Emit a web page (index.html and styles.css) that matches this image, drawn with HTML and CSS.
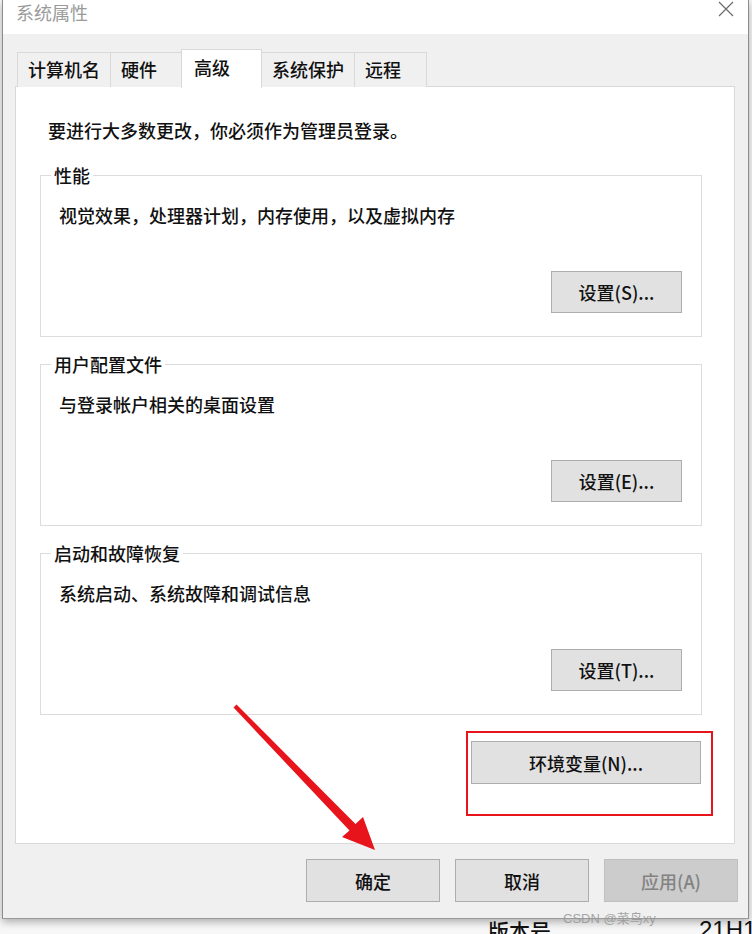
FILE: index.html
```html
<!DOCTYPE html>
<html lang="zh-CN">
<head>
<meta charset="utf-8">
<title>系统属性</title>
<link rel="stylesheet" href="styles.css">
</head>
<body>
<div class="window">
  <div class="titlebar">
    <span class="title">系统属性</span>
    <svg class="close" width="16" height="16" viewBox="0 0 16 16"><path d="M1 1L15 15M15 1L1 15" stroke="#6b6b6b" stroke-width="1.2" fill="none"/></svg>
  </div>
  <div class="content">
    <div class="tabs">
      <div class="tab">计算机名</div>
      <div class="tab tab-short">硬件</div>
      <div class="tab tab-active">高级</div>
      <div class="tab">系统保护</div>
      <div class="tab tab-short">远程</div>
    </div>
    <div class="panel">
      <p class="intro">要进行大多数更改，你必须作为管理员登录。</p>
      <fieldset class="group">
        <legend>性能</legend>
        <p class="desc">视觉效果，处理器计划，内存使用，以及虚拟内存</p>
        <div class="group-actions"><button class="btn btn-set">设置(S)...</button></div>
      </fieldset>
      <fieldset class="group">
        <legend>用户配置文件</legend>
        <p class="desc">与登录帐户相关的桌面设置</p>
        <div class="group-actions"><button class="btn btn-set">设置(E)...</button></div>
      </fieldset>
      <fieldset class="group">
        <legend>启动和故障恢复</legend>
        <p class="desc">系统启动、系统故障和调试信息</p>
        <div class="group-actions"><button class="btn btn-set">设置(T)...</button></div>
      </fieldset>
      <div class="env-row">
        <div class="highlight">
          <button class="btn btn-env">环境变量(N)...</button>
        </div>
      </div>
    </div>
    <div class="footer">
      <button class="btn btn-foot">确定</button>
      <button class="btn btn-foot">取消</button>
      <button class="btn btn-foot btn-disabled">应用(A)</button>
    </div>
  </div>
</div>
<div class="behind">
  <span class="behind-label">版本号</span>
  <span class="behind-value">21H1</span>
</div>
<svg class="arrow" width="752" height="934" viewBox="0 0 752 934">
  <polygon fill="#e8141c" points="233.5,707.5 236.5,704.5 355.5,824 363,817 375,850 342,837 349.5,830.5"/>
</svg>
<div class="watermark">CSDN @菜鸟xy</div>
</body>
</html>
```

FILE: styles.css
```css
* { box-sizing: border-box; }
html, body { margin: 0; padding: 0; }
body {
  width: 752px;
  height: 934px;
  overflow: hidden;
  background: #f7f7f7;
  font-family: "Noto Sans CJK SC", "Microsoft YaHei", sans-serif;
  font-weight: 500;
  color: #111;
  position: relative;
}
.window {
  margin-left: 2px;
  width: 747px;
  height: 919px;
  border-left: 1px solid #8c8c8c;
  border-right: 1px solid #8c8c8c;
  border-bottom: 1px solid #9a9a9a;
  background: #f0f0f0;
  box-shadow: 0 3px 8px rgba(0,0,0,0.3);
  display: flex;
  flex-direction: column;
  position: relative;
  z-index: 1;
}
.titlebar {
  height: 34px;
  background: #fff;
  display: flex;
  align-items: center;
  justify-content: space-between;
  padding: 0 13px 0 13px;
}
.title {
  font-size: 18px;
  line-height: 24px;
  font-weight: 400;
  color: #9a9a9a;
  margin-top: -11px;
}
.close { margin-top: -17px; margin-right: 1px; }
.content {
  flex: 1;
  padding: 15px 10px 0 12px;
  display: flex;
  flex-direction: column;
}
.tabs {
  display: flex;
  align-items: flex-end;
  height: 38px;
  margin-left: 2px;
  position: relative;
  z-index: 2;
}
.tab {
  height: 35px;
  padding: 0 10px;
  font-size: 18px;
  line-height: 33px;
  background: #f0f0f0;
  border: 1px solid #d9d9d9;
  border-bottom: none;
  margin-right: -1px;
  white-space: nowrap;
}
.tab-short { min-width: 73px; }
.tab-active {
  height: 39px;
  margin-bottom: -1px;
  background: #fff;
  min-width: 81px;
  padding: 0 12px;
  line-height: 34px;
  margin-left: -1px;
  margin-right: -1px;
  position: relative;
  z-index: 2;
}
.panel {
  width: 720px;
  height: 758px;
  margin-top: -1px;
  background: #fff;
  border: 1px solid #d9d9d9;
  padding: 31px 32px 0 24px;
  display: flex;
  flex-direction: column;
}
.intro {
  margin: 0 0 21px 8px;
  font-size: 18px;
  line-height: 24px;
}
.group {
  margin: 0 0 15px 0;
  border: 1px solid #dcdcdc;
  padding: 16px 19px 23px 18px;
  min-width: 0;
}
.group legend {
  font-size: 18px;
  line-height: 24px;
  padding: 0 3px;
  margin-left: -8px;
}
.desc {
  margin: 0;
  font-size: 18px;
  line-height: 24px;
}
.group-actions {
  display: flex;
  justify-content: flex-end;
  margin-top: 44px;
}
.btn {
  font-family: "Noto Sans CJK SC", "Microsoft YaHei", sans-serif;
  font-size: 18px;
  font-weight: 500;
  line-height: 24px;
  color: #111;
  background: #e1e1e1;
  border: 1px solid #adadad;
  padding: 0;
  margin: 0;
}
.btn-set { width: 131px; height: 42px; }
.env-row {
  display: flex;
  justify-content: flex-end;
  margin-top: 1px;
  margin-right: -11px;
}
.highlight {
  width: 247px;
  border: 2px solid #e8141c;
  padding: 8px 10px 30px 3px;
}
.btn-env { width: 230px; height: 43px; display: block; }
.footer {
  display: flex;
  justify-content: flex-end;
  gap: 15px;
  margin-top: 15px;
}
.btn-foot { width: 134px; height: 43px; }
.btn-disabled {
  background: #cccccc;
  border-color: #bfbfbf;
  color: #838383;
}
.behind {
  display: flex;
  height: 15px;
  overflow: hidden;
  padding-left: 488px;
  white-space: nowrap;
}
.behind-label {
  flex-shrink: 0;
  font-size: 21px;
  line-height: 22px;
  color: #111;
}
.behind-value {
  flex-shrink: 0;
  margin-left: 148px;
  font-family: "Liberation Sans", sans-serif;
  font-size: 24px;
  line-height: 22px;
  color: #111;
}
.arrow {
  position: absolute;
  left: 0;
  top: 0;
  z-index: 3;
  pointer-events: none;
}
.watermark {
  position: absolute;
  left: 563px;
  top: 910px;
  z-index: 4;
  font-size: 13px;
  line-height: 18px;
  font-weight: 400;
  color: rgba(150,150,150,0.85);
  font-family: "Liberation Sans", "Noto Sans CJK SC", sans-serif;
}
```
